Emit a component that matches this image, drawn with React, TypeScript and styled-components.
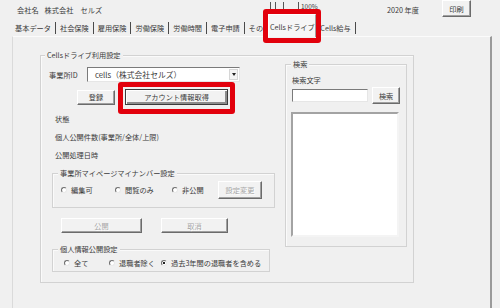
import styled, { createGlobalStyle, css } from "styled-components";

const COLOR = {
  FACE: "#f0f0f0",
  TEXT: "#3a3a3a",
  DISABLED: "#a6a6a6",
  GROUP_LINE: "#d2d2d2",
  SHADOW: "#a0a0a0",
  DARK: "#6b6b6b",
  RED: "#e2000c",
};

const GlobalStyle = createGlobalStyle`
  html, body {
    margin: 0;
    padding: 0;
    background: ${COLOR.FACE};
  }
  * {
    box-sizing: border-box;
  }
`;

const S = {
  Screen: styled.div`
    width: 500px;
    height: 308px;
    overflow: hidden;
    background: ${COLOR.FACE};
    color: ${COLOR.TEXT};
    font-family: "Noto Sans CJK JP", "Noto Sans", sans-serif;
    font-size: 7.2px;
    line-height: 12px;
  `,
  TopBar: styled.div`
    display: flex;
    align-items: center;
    height: 20px;
    padding-left: 17px;
  `,
  Company: styled.div`
    width: 249px;
    display: flex;
    gap: 6px;
  `,
  ZoomBar: styled.div`
    width: 121px;
    align-self: stretch;
    display: flex;
    align-items: flex-start;
    padding: 2px 0 0 4px;
    font-size: 6.5px;
    line-height: 8px;
  `,
  Tick: styled.span<{ $gap: number }>`
    width: 1px;
    height: 7px;
    margin-right: ${({ $gap }) => $gap}px;
    background: #555;
  `,
  Year: styled.div`
    width: 55px;
  `,
  TabStrip: styled.div`
    display: flex;
    align-items: center;
    height: 16px;
    padding-left: 11px;
  `,
  Tab: styled.div<{ $plain?: boolean }>`
    padding: 0 4px;
    line-height: 12px;
    border-right: 1px solid #4a4a4a;
    white-space: nowrap;

    ${({ $plain }) =>
      $plain &&
      css`
        border-right: none;
        padding-right: 0;
      `}
  `,
  ActiveTab: styled.div`
    position: relative;
    z-index: 1;
    align-self: flex-start;
    width: 48px;
    height: 23px;
    margin: -6px 0 0 -2px;
    padding-top: 6px;
    text-align: center;
    white-space: nowrap;
    background: #f6f6f6;
    border-top: 1px solid #fff;
    border-left: 1px solid #fff;
    border-right: 1px solid ${COLOR.SHADOW};
  `,
  Highlight: styled.div`
    position: relative;
    display: flex;
  `,
  RedFrame: styled.span<{ $inset: string }>`
    position: absolute;
    inset: ${({ $inset }) => $inset};
    border: 5px solid ${COLOR.RED};
    border-radius: 3px;
    pointer-events: none;
    z-index: 2;
  `,
  Panel: styled.div`
    margin-left: 12px;
    width: 480px;
    height: 272px;
    padding: 18px 0 0 27px;
    border-top: 1px solid #fbfbfb;
    border-left: 1px solid #dadada;
    border-right: 2px solid #9a9a9a;
  `,
  GroupBox: styled.div<{ $w: number; $top?: number; $left?: number }>`
    width: ${({ $w }) => $w}px;
    margin-top: ${({ $top = 0 }) => $top}px;
    margin-left: ${({ $left = 0 }) => $left}px;
    display: flex;
    flex-direction: column;
    border: 1px solid ${COLOR.GROUP_LINE};
    box-shadow: inset 1px 1px #fafafa;
  `,
  Legend: styled.div<{ $left: number }>`
    align-self: flex-start;
    margin: -6px 0 0 ${({ $left }) => $left}px;
    padding: 0 2px;
    line-height: 10px;
    background: ${COLOR.FACE};
    white-space: nowrap;
  `,
  MainBody: styled.div`
    display: flex;
    align-items: flex-start;
    gap: 10px;
    padding: 0 6px 10px 8px;
  `,
  LeftCol: styled.div`
    width: 226px;
    display: flex;
    flex-direction: column;
  `,
  IdRow: styled.div`
    display: flex;
    align-items: center;
    height: 15px;
    margin-top: 7px;
  `,
  IdLabel: styled.div`
    width: 38px;
  `,
  Select: styled.div`
    width: 153px;
    height: 15px;
    display: flex;
    align-items: center;
    padding-left: 7px;
    background: #fff;
    border: 1px solid;
    border-color: #7a7a7a #e6e6e6 #e6e6e6 #7a7a7a;
    font-size: 7.8px;
  `,
  ArrowBox: styled.span`
    margin-left: auto;
    margin-right: 1px;
    width: 9px;
    height: 11px;
    display: flex;
    align-items: center;
    justify-content: center;
    border: 1px solid #d6d6d6;
    background: #f4f4f4;

    &::after {
      content: "";
      border-left: 2.5px solid transparent;
      border-right: 2.5px solid transparent;
      border-top: 3px solid #222;
    }
  `,
  ActionRow: styled.div`
    display: flex;
    align-items: center;
    gap: 10px;
    height: 16px;
    margin-top: 7px;
    padding-left: 28px;
  `,
  StatusLine: styled.div<{ $top: number }>`
    margin: ${({ $top }) => $top}px 0 0 6px;
    line-height: 12px;
  `,
  OptionRow: styled.div<{ $h: number; $pad: number }>`
    display: flex;
    align-items: center;
    height: ${({ $h }) => $h}px;
    padding-left: ${({ $pad }) => $pad}px;
  `,
  RadioItem: styled.label<{ $w?: number }>`
    display: flex;
    align-items: center;
    gap: 4px;
    width: ${({ $w }) => ($w ? `${$w}px` : "auto")};
    white-space: nowrap;
  `,
  Radio: styled.span<{ $checked?: boolean }>`
    position: relative;
    width: 6px;
    height: 6px;
    border-radius: 50%;
    border: 1px solid;
    border-color: #6d6d6d #e8e8e8 #e8e8e8 #6d6d6d;
    background: #fff;

    ${({ $checked }) =>
      $checked &&
      css`
        &::after {
          content: "";
          position: absolute;
          inset: 1px;
          background: #222;
        }
      `}
  `,
  ButtonRow: styled.div`
    display: flex;
    gap: 19px;
    height: 15px;
    margin-top: 10px;
    padding-left: 12px;
  `,
  Button: styled.button<{ $w: number; $h: number; $default?: boolean }>`
    width: ${({ $w }) => $w}px;
    height: ${({ $h }) => $h}px;
    margin: 0;
    padding: 0;
    font: inherit;
    line-height: 10px;
    color: ${COLOR.TEXT};
    background: #f2f2f2;
    border: 1px solid;
    border-color: #fff ${COLOR.DARK} ${COLOR.DARK} #fff;
    box-shadow: inset -1px -1px ${COLOR.SHADOW};

    &:disabled {
      color: ${COLOR.DISABLED};
      text-shadow: 1px 1px #fff;
    }

    ${({ $default }) =>
      $default &&
      css`
        border-color: #3c3c3c;
        box-shadow: inset 1px 1px #fff, inset -2px -2px #8c8c8c;
      `}
  `,
  PrintButton: styled.div`
    align-self: flex-start;
    display: flex;
  `,
  SearchBody: styled.div`
    display: flex;
    flex-direction: column;
    padding: 0 6px 9px;
  `,
  SearchLabel: styled.div`
    margin-top: 5px;
    line-height: 12px;
  `,
  SearchRow: styled.div`
    display: flex;
    align-items: center;
    gap: 4px;
    height: 17px;
    margin-top: 1px;
  `,
  TextInput: styled.div`
    width: 77px;
    height: 13px;
    background: #fff;
    border: 1px solid;
    border-color: #7a7a7a #e6e6e6 #e6e6e6 #7a7a7a;
  `,
  ListBox: styled.div`
    width: 108px;
    height: 125px;
    margin: 8px 0 0 -1px;
    background: #fff;
    border: 2px solid;
    border-color: #a3a3a3 #f4f4f4 #f4f4f4 #a3a3a3;
  `,
};

const tabs = ["基本データ", "社会保険", "雇用保険", "労働保険", "労働時間", "電子申請"];

const App = () => {
  return (
    <S.Screen>
      <GlobalStyle />
      <S.TopBar>
        <S.Company>
          <span>会社名</span>
          <span>株式会社　セルズ</span>
        </S.Company>
        <S.ZoomBar>
          <S.Tick $gap={4} />
          <S.Tick $gap={7} />
          <S.Tick $gap={14} />
          <S.Tick $gap={2} />
          <span>100%</span>
        </S.ZoomBar>
        <S.Year>2020 年度</S.Year>
        <S.PrintButton>
          <S.Button $w={29} $h={17}>
            印刷
          </S.Button>
        </S.PrintButton>
      </S.TopBar>

      <S.TabStrip>
        {tabs.map((t) => (
          <S.Tab key={t}>{t}</S.Tab>
        ))}
        <S.Tab $plain>その他</S.Tab>
        <S.ActiveTab>
          Cellsドライブ
          <S.RedFrame $inset="-6px -6px -6px -6px" />
        </S.ActiveTab>
        <S.Tab>Cells給与</S.Tab>
      </S.TabStrip>

      <S.Panel>
        <S.GroupBox $w={374}>
          <S.Legend $left={4}>Cellsドライブ利用設定</S.Legend>
          <S.MainBody>
            <S.LeftCol>
              <S.IdRow>
                <S.IdLabel>事業所ID</S.IdLabel>
                <S.Select>
                  cells（株式会社セルズ）
                  <S.ArrowBox />
                </S.Select>
              </S.IdRow>
              <S.ActionRow>
                <S.Button $w={38} $h={15}>
                  登録
                </S.Button>
                <S.Highlight>
                  <S.Button $w={103} $h={16} $default>
                    アカウント情報取得
                  </S.Button>
                  <S.RedFrame $inset="-7px -7px -9px -7px" />
                </S.Highlight>
              </S.ActionRow>
              <S.StatusLine $top={8}>状態</S.StatusLine>
              <S.StatusLine $top={6}>個人公開件数(事業所/全体/上限)</S.StatusLine>
              <S.StatusLine $top={6}>公開処理日時</S.StatusLine>

              <S.GroupBox $w={223} $top={12} $left={3}>
                <S.Legend $left={5}>事業所マイページマイナンバー設定</S.Legend>
                <S.OptionRow $h={18} $pad={8} style={{ margin: "3px 0 8px" }}>
                  <S.RadioItem $w={54}>
                    <S.Radio />
                    編集可
                  </S.RadioItem>
                  <S.RadioItem $w={57}>
                    <S.Radio />
                    閲覧のみ
                  </S.RadioItem>
                  <S.RadioItem $w={46}>
                    <S.Radio />
                    非公開
                  </S.RadioItem>
                  <S.Button $w={44} $h={18} disabled>
                    設定変更
                  </S.Button>
                </S.OptionRow>
              </S.GroupBox>

              <S.ButtonRow>
                <S.Button $w={81} $h={15} disabled>
                  公開
                </S.Button>
                <S.Button $w={67} $h={15} disabled>
                  取消
                </S.Button>
              </S.ButtonRow>

              <S.GroupBox $w={218} $top={16} $left={3}>
                <S.Legend $left={5}>個人情報公開設定</S.Legend>
                <S.OptionRow $h={12} $pad={11} style={{ margin: "3px 0 2px" }}>
                  <S.RadioItem $w={45}>
                    <S.Radio />
                    全て
                  </S.RadioItem>
                  <S.RadioItem $w={52}>
                    <S.Radio />
                    退職者除く
                  </S.RadioItem>
                  <S.RadioItem>
                    <S.Radio $checked />
                    過去3年間の退職者を含める
                  </S.RadioItem>
                </S.OptionRow>
              </S.GroupBox>
            </S.LeftCol>

            <S.GroupBox $w={122} $top={4}>
              <S.Legend $left={5}>検索</S.Legend>
              <S.SearchBody>
                <S.SearchLabel>検索文字</S.SearchLabel>
                <S.SearchRow>
                  <S.TextInput />
                  <S.Button $w={28} $h={17}>
                    検索
                  </S.Button>
                </S.SearchRow>
                <S.ListBox />
              </S.SearchBody>
            </S.GroupBox>
          </S.MainBody>
        </S.GroupBox>
      </S.Panel>
    </S.Screen>
  );
};

export default App;
